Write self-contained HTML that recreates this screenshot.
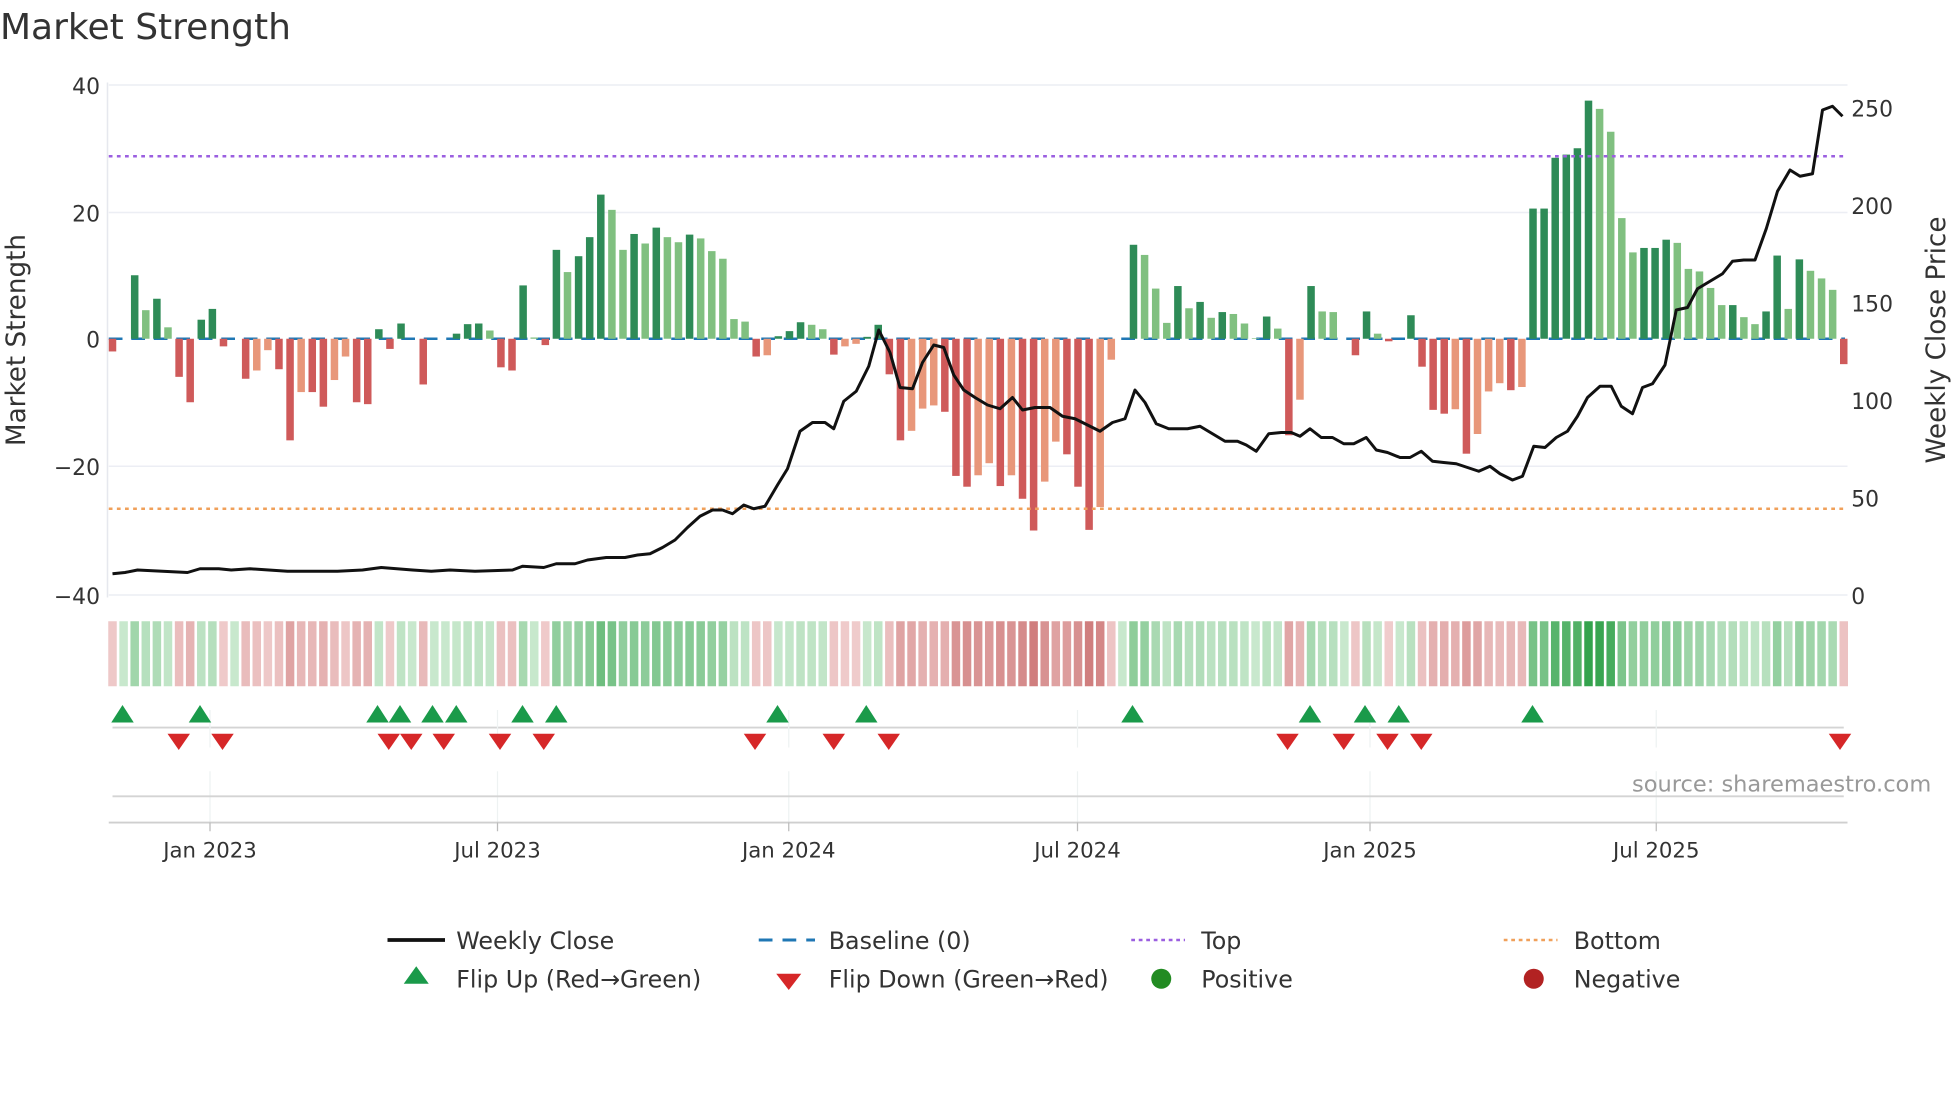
<!DOCTYPE html>
<html><head><meta charset="utf-8"><style>
html,body{margin:0;padding:0;background:#fff;width:1960px;height:1102px;overflow:hidden}
svg{display:block}
text{font-family:"DejaVu Sans","Liberation Sans",sans-serif;fill:#333}
</style></head><body>
<svg id="s" width="1960" height="1102" viewBox="0 0 1568 881.6" xmlns="http://www.w3.org/2000/svg">
<text x="0" y="31" font-size="28.8" fill="#333">Market Strength</text>
<g id="grid" stroke="#eceef4" stroke-width="1.2">
<line x1="87" x2="1478" y1="68" y2="68"/><line x1="87" x2="1478" y1="170" y2="170"/><line x1="87" x2="1478" y1="373" y2="373"/><line x1="87" x2="1478" y1="476" y2="476"/>
<line x1="86" x2="86" y1="66" y2="478" stroke="#e6e8ee"/>
</g>
<g font-size="17.5" text-anchor="end">
<text x="80" y="75">40</text><text x="80" y="177">20</text><text x="80" y="278">0</text><text x="80" y="380">−20</text><text x="80" y="483">−40</text>
</g>
<g font-size="17.5">
<text x="1481" y="93">250</text><text x="1481" y="171">200</text><text x="1481" y="249">150</text><text x="1481" y="327">100</text><text x="1481" y="405">50</text><text x="1481" y="483">0</text>
</g>
<text transform="translate(20,272) rotate(-90)" font-size="21" text-anchor="middle">Market Strength</text>
<text transform="translate(1556,272) rotate(-90)" font-size="21" text-anchor="middle">Weekly Close Price</text>
<line x1="87" x2="1476" y1="271" y2="271" stroke="#1f77b4" stroke-width="2" stroke-dasharray="11,7"/>
<g id="bars"></g>
<line x1="87" x2="1476" y1="125" y2="125" stroke="#9b5fe0" stroke-width="2" stroke-dasharray="3,3.5"/>
<line x1="87" x2="1476" y1="407" y2="407" stroke="#f0a05a" stroke-width="2" stroke-dasharray="3,3.5"/>
<polyline id="price" fill="none" stroke="#111" stroke-width="2.4" stroke-linejoin="round"/>
<g id="heat"></g>
<line x1="90" x2="1475" y1="582" y2="582" stroke="#d4d4d4" stroke-width="1.5"/>
<g stroke="#eef2f2" stroke-width="1"><line x1="168" x2="168" y1="568" y2="598"/><line x1="398" x2="398" y1="568" y2="598"/><line x1="631" x2="631" y1="568" y2="598"/><line x1="862" x2="862" y1="568" y2="598"/><line x1="1096" x2="1096" y1="568" y2="598"/><line x1="1325" x2="1325" y1="568" y2="598"/>
<line x1="168" x2="168" y1="617" y2="658"/><line x1="398" x2="398" y1="617" y2="658"/><line x1="631" x2="631" y1="617" y2="658"/><line x1="862" x2="862" y1="617" y2="658"/><line x1="1096" x2="1096" y1="617" y2="658"/><line x1="1325" x2="1325" y1="617" y2="658"/></g>
<g id="flips"></g>
<line x1="90" x2="1475" y1="637" y2="637" stroke="#d4d4d4" stroke-width="1.5"/>
<line x1="87" x2="1478" y1="658" y2="658" stroke="#cfcfcf" stroke-width="1.5"/>
<g stroke="#bbb" stroke-width="1"><line x1="168" x2="168" y1="658" y2="665"/><line x1="398" x2="398" y1="658" y2="665"/><line x1="631" x2="631" y1="658" y2="665"/><line x1="862" x2="862" y1="658" y2="665"/><line x1="1096" x2="1096" y1="658" y2="665"/><line x1="1325" x2="1325" y1="658" y2="665"/></g>
<g font-size="17" text-anchor="middle">
<text x="168" y="686">Jan 2023</text><text x="398" y="686">Jul 2023</text><text x="631" y="686">Jan 2024</text><text x="862" y="686">Jul 2024</text><text x="1096" y="686">Jan 2025</text><text x="1325" y="686">Jul 2025</text>
</g>
<text x="1545" y="633" font-size="18" text-anchor="end" fill="#999" style="fill:#999">source: sharemaestro.com</text>
<g font-size="19">
<line x1="310" x2="356" y1="752" y2="752" stroke="#111" stroke-width="3"/><text x="365" y="759">Weekly Close</text>
<line x1="607" x2="652" y1="752" y2="752" stroke="#1f77b4" stroke-width="2.4" stroke-dasharray="11,8"/><text x="663" y="759">Baseline (0)</text>
<line x1="905" x2="948" y1="752" y2="752" stroke="#9b5fe0" stroke-width="2" stroke-dasharray="3,3"/><text x="961" y="759">Top</text>
<line x1="1203" x2="1246" y1="752" y2="752" stroke="#f0a05a" stroke-width="2" stroke-dasharray="3,3"/><text x="1259" y="759">Bottom</text>
<polygon points="333,773 343,787 323,787" fill="#1a9a4a"/><text x="365" y="790">Flip Up (Red→Green)</text>
<polygon points="621,779 641,779 631,792" fill="#d62728"/><text x="663" y="790">Flip Down (Green→Red)</text>
<circle cx="929" cy="783" r="8" fill="#228b22"/><text x="961" y="790">Positive</text>
<circle cx="1227" cy="783" r="8" fill="#b22222"/><text x="1259" y="790">Negative</text>
</g>
</svg>
<script>
var v=[-2,0,10,4.5,6.3,1.8,-6,-10,3,4.7,-1.2,0,-6.3,-5,-1.8,-4.8,-16,-8.4,-8.4,-10.7,-6.5,-2.8,-10,-10.3,1.5,-1.6,2.4,0,-7.2,0,0,0.8,2.3,2.4,1.3,-4.5,-5,8.4,0.2,-1,14,
10.5,13,16,22.7,20.3,14,16.5,15,17.5,16,15.2,16.4,15.8,13.8,12.6,3.1,2.7,-2.8,-2.6,0.4,1.2,2.6,2.2,1.5,-2.5,-1.2,-0.8,0.3,2.2,-5.6,-16,-14.5,-11,-10.5,-11.5,-21.6,-23.3,-21.5,-19.6,-23.2,-21.5,-25.2,-30.2,-22.5,-16.2,-18.2,-23.3,-30.1,-26.5,-3.3,0,14.8,13.2,7.9,2.5,8.3,4.8,5.8,3.3,4.2,3.9,2.4,0.1,3.5,1.6,-15.2,-9.6,8.3,4.3,4.2,0,-2.6,4.3,0.8,-0.4,0,3.7,-4.4,-11.2,-11.8,-11.1,-18.1,-15,-8.3,-7,-8.1,-7.6,20.5,20.5,28.5,29,30,37.5,36.2,32.6,19,13.6,14.3,14.3,15.6,15.1,11,10.6,8,5.3,5.3,3.4,2.3,4.3,13.1,4.7,12.5,10.7,9.5,7.7,-4];
var ns="http://www.w3.org/2000/svg",B=document.getElementById('bars'),H=document.getElementById('heat'),F=document.getElementById('flips');
function el(t,a,p){var e=document.createElementNS(ns,t);for(var k in a)e.setAttribute(k,a[k]);p.appendChild(e);return e}
var step=(1475-90)/(v.length-1);
for(var i=0;i<v.length;i++){var x=90+i*step,val=v[i],prev=i?v[i-1]:0;
 var rising=Math.abs(val)>=Math.abs(prev)||(val*prev<=0);var c;
 if(val>=0)c=rising?'#2e8b57':'#80c080';else c=rising?'#cf5a5a':'#e8977a';
 var h=Math.abs(val)*5.08,y=val>=0?271-h:271;
 if(h>0.3)el('rect',{x:x-3,y:y,width:6,height:h,fill:c},B);
 var t=Math.min(1,Math.abs(val)/38),hc;
 if(val>=0){hc='rgb('+Math.round(200-150*t)+','+Math.round(232-70*t)+','+Math.round(205-130*t)+')';}
 else{hc='rgb('+Math.round(240-40*t)+','+Math.round(205-100*t)+','+Math.round(205-100*t)+')';}
 el('rect',{x:x-3.4,y:497,width:6.8,height:52,fill:hc},H);
}
var p=[[90,459],[100,458],[110,456],[130,457],[150,458],[160,455],[175,455],[185,456],[200,455],[215,456],[230,457],[250,457],[270,457],[290,456],[305,454],[330,456],[345,457],[360,456],[380,457],[410,456],[418,453],[435,454],[445,451],[460,451],[470,448],[485,446],[500,446],[510,444],[520,443],[530,438],[540,432],[550,422],[560,413],[570,408],[578,408],[586,411],[595,404],[603,407],[612,405],[622,388],[630,375],[640,345],[650,338],[660,338],[667,343],[675,321],[685,313],[695,293],[703,264],[712,282],[720,310],[730,311],[738,290],[747,276],[755,278],[763,300],[771,312],[780,318],[790,324],[800,327],[810,318],[818,328],[828,326],[840,326],[850,333],[860,335],[870,340],[880,345],[890,338],[900,335],[908,312],[916,322],[925,339],[935,343],[950,343],[960,341],[970,347],[980,353],[990,353],[997,356],[1005,361],[1015,347],[1025,346],[1033,346],[1040,349],[1048,343],[1057,350],[1066,350],[1075,355],[1083,355],[1093,350],[1101,360],[1110,362],[1120,366],[1128,366],[1137,361],[1146,369],[1155,370],[1165,371],[1174,374],[1183,377],[1192,373],[1200,379],[1210,384],[1218,381],[1227,357],[1236,358],[1245,350],[1254,345],[1262,333],[1270,318],[1280,309],[1289,309],[1297,325],[1306,331],[1314,310],[1322,307],[1332,292],[1341,248],[1350,246],[1358,231],[1368,225],[1378,219],[1386,209],[1395,208],[1404,208],[1413,183],[1422,153],[1432,136],[1440,141],[1450,139],[1458,88],[1466,85],[1474,93]];
document.getElementById('price').setAttribute('points',p.map(function(q){return q.join(',')}).join(' '));
[98,160,302,320,346,365,418,445,622,693,906,1048,1092,1119,1226].forEach(function(x){el('polygon',{points:(x)+',564 '+(x+9)+',578 '+(x-9)+',578',fill:'#1a9a4a'},F)});
[143,178,311,329,355,400,435,604,667,711,1030,1075,1110,1137,1472].forEach(function(x){el('polygon',{points:(x-9)+',587 '+(x+9)+',587 '+x+',600',fill:'#d62728'},F)});
</script>
</body></html>
